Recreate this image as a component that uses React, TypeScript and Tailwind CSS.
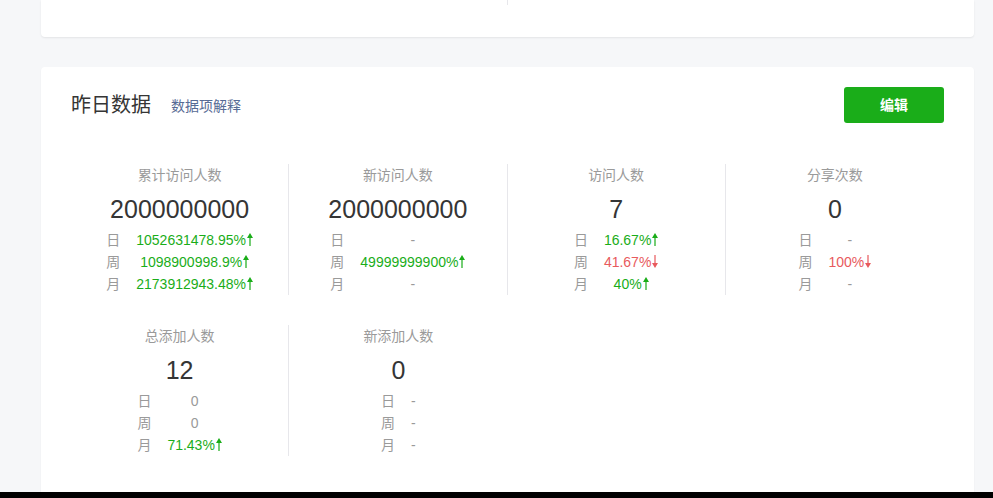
import React from "react";

type Sub = { label: string; value: string; trend?: "up" | "down" };
type Stat = { title: string; value: string; rows: Sub[] };

const row1: Stat[] = [
  {
    title: "累计访问人数",
    value: "2000000000",
    rows: [
      { label: "日", value: "1052631478.95%", trend: "up" },
      { label: "周", value: "1098900998.9%", trend: "up" },
      { label: "月", value: "2173912943.48%", trend: "up" },
    ],
  },
  {
    title: "新访问人数",
    value: "2000000000",
    rows: [
      { label: "日", value: "-" },
      { label: "周", value: "49999999900%", trend: "up" },
      { label: "月", value: "-" },
    ],
  },
  {
    title: "访问人数",
    value: "7",
    rows: [
      { label: "日", value: "16.67%", trend: "up" },
      { label: "周", value: "41.67%", trend: "down" },
      { label: "月", value: "40%", trend: "up" },
    ],
  },
  {
    title: "分享次数",
    value: "0",
    rows: [
      { label: "日", value: "-" },
      { label: "周", value: "100%", trend: "down" },
      { label: "月", value: "-" },
    ],
  },
];

const row2: Stat[] = [
  {
    title: "总添加人数",
    value: "12",
    rows: [
      { label: "日", value: "0" },
      { label: "周", value: "0" },
      { label: "月", value: "71.43%", trend: "up" },
    ],
  },
  {
    title: "新添加人数",
    value: "0",
    rows: [
      { label: "日", value: "-" },
      { label: "周", value: "-" },
      { label: "月", value: "-" },
    ],
  },
];

function Arrow({ down }: { down?: boolean }) {
  return (
    <svg
      width="6"
      height="13"
      viewBox="0 0 6 13"
      className="inline-block align-[-1px] ml-[1px]"
      fill="currentColor"
    >
      {down ? (
        <>
          <rect x="2.4" y="0" width="1.2" height="9" />
          <path d="M0 8 L6 8 L3 13 Z" />
        </>
      ) : (
        <>
          <rect x="2.4" y="4" width="1.2" height="9" />
          <path d="M0 5 L6 5 L3 0 Z" />
        </>
      )}
    </svg>
  );
}

function StatCell({ s, last }: { s: Stat; last: boolean }) {
  return (
    <div
      className={`flex flex-col items-center h-[131px] ${
        last ? "" : "border-r border-[#e7e7eb]"
      }`}
    >
      <div className="text-[14px] leading-[22px] text-[#9a9a9a]">{s.title}</div>
      <div className="mt-[6px] text-[25px] leading-[35px] text-[#353535]">{s.value}</div>
      <table className="mt-[2px] border-collapse">
        <tbody>
          {s.rows.map((r) => (
            <tr key={r.label} className="text-[14px] leading-[22px]">
              <td className="p-0 text-[#9a9a9a]">{r.label}</td>
              <td
                className={`p-0 pl-4 text-center whitespace-nowrap ${
                  r.trend === "up"
                    ? "text-[#1aad19]"
                    : r.trend === "down"
                    ? "text-[#e85a5d]"
                    : "text-[#9a9a9a]"
                }`}
              >
                {r.value}
                {r.trend && <Arrow down={r.trend === "down"} />}
              </td>
            </tr>
          ))}
        </tbody>
      </table>
    </div>
  );
}

export default function App() {
  return (
    <div
      className="w-[993px] h-[498px] overflow-hidden bg-[#f6f7f9] relative"
      style={{ fontFamily: '"Liberation Sans", "Noto Sans CJK SC", sans-serif' }}
    >
      <div className="ml-[41px] w-[933px] h-[37px] bg-white rounded-b-[4px] shadow-[0_1px_2px_rgba(0,0,0,0.08)] flex">
        <div className="w-[467px] h-[5px] border-r border-[#e7e7eb]" />
      </div>
      <div className="ml-[41px] mt-[30px] w-[933px] h-[460px] bg-white rounded-[4px] shadow-[0_1px_2px_rgba(0,0,0,0.06)] px-[30px] pt-[20px]">
        <div className="flex items-center justify-between h-[36px]">
          <div className="flex items-center">
            <span className="text-[20px] text-[#353535] leading-[28px]">昨日数据</span>
            <span className="ml-[20px] text-[14px] text-[#576b95] leading-[20px] mt-[2px]">数据项解释</span>
          </div>
          <button className="w-[100px] h-[36px] rounded-[3px] bg-[#1aad19] text-white text-[14px] font-bold">
            编辑
          </button>
        </div>
        <div className="mt-[41px] grid grid-cols-4">
          {row1.map((s, i) => (
            <StatCell key={s.title} s={s} last={i === row1.length - 1} />
          ))}
        </div>
        <div className="mt-[30px] grid grid-cols-4">
          {row2.map((s, i) => (
            <StatCell key={s.title} s={s} last={i === row2.length - 1} />
          ))}
        </div>
      </div>
      <div className="absolute left-0 bottom-0 w-full h-[6px] bg-black" />
    </div>
  );
}
